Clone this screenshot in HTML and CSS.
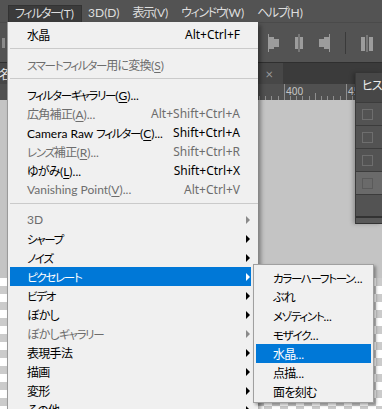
FILE: index.html
```html
<!DOCTYPE html>
<html lang="ja">

<head>
    <meta charset="UTF-8">
    <meta name="viewport" content="width=device-width, initial-scale=1.0">
    <title>フィルターメニュー</title>
    <link rel="stylesheet" href="styles.css">
</head>

<body>
    <div class="app">
        <div class="menubar">
            <span class="mbItem active">フィルター<span class="en">(T)</span></span>
            <span class="mbItem"><span class="en">3D(D)</span></span>
            <span class="mbItem">表示<span class="en">(V)</span></span>
            <span class="mbItem">ウィンドウ<span class="en">(W)</span></span>
            <span class="mbItem">ヘルプ<span class="en">(H)</span></span>
        </div>

        <div class="optbar">
            <span class="grip"></span>
            <div class="alignIcons">
                <svg width="12" height="18" viewBox="0 0 12 18">
                    <rect x="0" y="0" width="1" height="18" />
                    <rect x="1" y="3" width="5" height="12" />
                    <rect x="6" y="5" width="5" height="8" />
                </svg>
                <svg width="12" height="18" viewBox="0 0 12 18">
                    <rect x="5.5" y="0" width="1" height="18" />
                    <rect x="2" y="3" width="8" height="12" />
                    <rect x="5.5" y="3" width="1" height="12" fill="#535353" />
                </svg>
                <svg width="12" height="18" viewBox="0 0 12 18">
                    <rect x="11" y="0" width="1" height="18" />
                    <rect x="6" y="3" width="5" height="12" />
                    <rect x="1" y="5" width="5" height="8" />
                </svg>
                <span class="optSep"></span>
                <svg width="12" height="18" viewBox="0 0 12 18">
                    <rect x="0" y="3" width="4" height="14" />
                    <rect x="5.5" y="1" width="1" height="17" />
                    <rect x="8" y="3" width="4" height="14" />
                </svg>
            </div>
        </div>

        <div class="tabbar">
            <span class="docTab"><span class="docName">名</span><span class="tabClose">×</span></span>
        </div>

        <div class="ruler">
            <svg width="382" height="16" viewBox="0 0 382 16">
                <g fill="#8e8e8e">
                    <rect x="259" y="12" width="1" height="4" />
                    <rect x="265" y="12" width="1" height="4" />
                    <rect x="271" y="12" width="1" height="4" />
                    <rect x="278" y="12" width="1" height="4" />
                    <rect x="284" y="0" width="1" height="16" />
                    <rect x="290" y="12" width="1" height="4" />
                    <rect x="296" y="12" width="1" height="4" />
                    <rect x="302" y="12" width="1" height="4" />
                    <rect x="309" y="12" width="1" height="4" />
                    <rect x="315" y="9" width="1" height="7" />
                    <rect x="321" y="12" width="1" height="4" />
                    <rect x="327" y="12" width="1" height="4" />
                    <rect x="333" y="12" width="1" height="4" />
                    <rect x="340" y="12" width="1" height="4" />
                    <rect x="346" y="0" width="1" height="16" />
                    <rect x="352" y="12" width="1" height="4" />
                </g>
                <text x="286" y="11" class="rulerNum">400</text>
                <text x="348" y="11" class="rulerNum">45</text>
            </svg>
        </div>

        <div class="canvas">
            <div class="canvasGray"></div>
            <div class="canvasChecker"></div>
        </div>

        <div class="history">
            <div class="histHead">ヒス</div>
            <div class="histRow"><span class="histBox"></span></div>
            <div class="histRow"><span class="histBox"></span></div>
            <div class="histRow"><span class="histBox"></span></div>
            <div class="histRow current"><span class="histBox"></span></div>
            <div class="histRow last"></div>
            <div class="histFoot"></div>
        </div>
    </div>

    <div class="menu">
        <div class="item"><span class="label">水晶</span><span class="key">Alt+Ctrl+F</span></div>
        <div class="sep"></div>
        <div class="item off"><span class="label"><span class="kt">スマートフィルター</span>用に変換<span class="en">(<u>S</u>)</span></span></div>
        <div class="sep"></div>
        <div class="item"><span class="label"><span class="kt">フィルターギャラリー</span><span class="en">(<u>G</u>)...</span></span></div>
        <div class="item off"><span class="label">広角補正<span class="en">(<u>A</u>)...</span></span><span class="key">Alt+Shift+Ctrl+A</span></div>
        <div class="item"><span class="label"><span class="en">Camera Raw </span><span class="kt">フィルター</span><span class="en">(<u>C</u>)...</span></span><span class="key">Shift+Ctrl+A</span></div>
        <div class="item off"><span class="label"><span class="kt">レンズ</span>補正<span class="en">(<u>R</u>)...</span></span><span class="key">Shift+Ctrl+R</span></div>
        <div class="item"><span class="label">ゆがみ<span class="en">(<u>L</u>)...</span></span><span class="key">Shift+Ctrl+X</span></div>
        <div class="item off"><span class="label"><span class="en">Vanishing Point(<u>V</u>)...</span></span><span class="key">Alt+Ctrl+V</span></div>
        <div class="sep"></div>
        <div class="item sub off"><span class="label"><span class="en">3D</span></span><span class="arrow"></span></div>
        <div class="item sub"><span class="label"><span class="kt">シャープ</span></span><span class="arrow"></span></div>
        <div class="item sub"><span class="label"><span class="kt">ノイズ</span></span><span class="arrow"></span></div>
        <div class="item sub hover"><span class="label"><span class="kt">ピクセレート</span></span><span class="arrow"></span></div>
        <div class="item sub"><span class="label"><span class="kt">ビデオ</span></span><span class="arrow"></span></div>
        <div class="item sub"><span class="label">ぼかし</span><span class="arrow"></span></div>
        <div class="item sub off"><span class="label">ぼかし<span class="kt">ギャラリー</span></span><span class="arrow"></span></div>
        <div class="item sub"><span class="label">表現手法</span><span class="arrow"></span></div>
        <div class="item sub"><span class="label">描画</span><span class="arrow"></span></div>
        <div class="item sub"><span class="label">変形</span><span class="arrow"></span></div>
        <div class="item sub"><span class="label">その他</span><span class="arrow"></span></div>
    </div>

    <div class="submenu">
        <div class="item"><span class="label"><span class="kt">カラーハーフトーン</span><span class="en">...</span></span></div>
        <div class="item"><span class="label">ぶれ</span></div>
        <div class="item"><span class="label"><span class="kt">メゾティント</span><span class="en">...</span></span></div>
        <div class="item"><span class="label"><span class="kt">モザイク</span><span class="en">...</span></span></div>
        <div class="item hover"><span class="label">水晶<span class="en">...</span></span></div>
        <div class="item"><span class="label">点描<span class="en">...</span></span></div>
        <div class="item"><span class="label">面を刻む</span></div>
    </div>
</body>

</html>
```

FILE: styles.css
```css
* {
    box-sizing: border-box;
}

html,
body {
    margin: 0;
    height: 100%;
    overflow: hidden;
}

body {
    font-family: Lato, "Noto Sans CJK JP", sans-serif;
    font-size: 12px;
    font-feature-settings: "palt";
    background: #535353;
    color: #000;
}

/* japanese runs are set tight, latin runs normal */
.en {
    letter-spacing: 0;
}

.app {
    position: relative;
    height: 409px;
    display: flex;
    flex-direction: column;
}

/* menu bar */
.menubar {
    height: 22px;
    display: flex;
    align-items: flex-end;
    padding-left: 8px;
    background: #535353;
    color: #dedede;
}

.mbItem {
    height: 17px;
    line-height: 16px;
    padding: 0 7px 0 6px;
    letter-spacing: -1.4px;
    white-space: nowrap;
}

.mbItem.active {
    background: #3b3b3b;
    border: 1px solid #333;
    border-bottom: none;
}

/* options bar */
.optbar {
    height: 40px;
    display: flex;
    align-items: center;
    background: #535353;
    border-top: 1px solid #4a4a4a;
}

.grip {
    width: 3px;
    height: 10px;
    margin-left: 2px;
    background: #8a8a8a;
}

.alignIcons {
    display: flex;
    align-items: center;
    gap: 13px;
    margin-left: auto;
    padding-right: 9px;
    fill: #9c9c9c;
}

.optSep {
    width: 1px;
    height: 22px;
    margin: 0 2px;
    background: #3a3a3a;
}

/* document tabs */
.tabbar {
    height: 22px;
    display: flex;
    background: #3b3b3b;
    border-top: 1px solid #2f2f2f;
}

.docTab {
    width: 283px;
    display: flex;
    justify-content: space-between;
    align-items: center;
    padding: 0 10px 0 0;
    background: #474747;
    color: #e6e6e6;
    white-space: nowrap;
    overflow: hidden;
}

.docName {
    margin-left: -1px;
}

.tabClose {
    color: #9a9a9a;
    font-size: 13px;
}

/* ruler */
.ruler {
    height: 16px;
    background: #505050;
}

.ruler svg {
    display: block;
}

.rulerNum {
    font-family: "Noto Sans", sans-serif;
    font-size: 10px;
    fill: #c4c4c4;
}

/* canvas */
.canvas {
    flex: 1;
    display: flex;
    flex-direction: column;
}

.canvasGray {
    height: 178px;
    background: #c4c4c4;
}

.canvasChecker {
    flex: 1;
    background: conic-gradient(#cbcbcb 0 25%, #fff 0 50%, #cbcbcb 0 75%, #fff 0) 0 0 / 16px 16px;
}

/* history panel */
.history {
    position: absolute;
    right: 0;
    top: 73px;
    width: 27px;
    background: #535353;
    border-left: 1px solid #3a3a3a;
    box-shadow: -2px 0 4px rgba(0, 0, 0, 0.25);
}

.histHead {
    height: 29px;
    line-height: 26px;
    padding-left: 6px;
    background: #474747;
    color: #ececec;
    letter-spacing: -1px;
    white-space: nowrap;
    overflow: hidden;
}

.histRow {
    height: 23px;
    display: flex;
    align-items: center;
    padding-left: 6px;
    border-top: 1px solid #3c3c3c;
}

.histRow.current {
    background: #6a6a6a;
}

.histRow.last {
    height: 24px;
    border-bottom: 2px solid #333;
}

.histBox {
    width: 11px;
    height: 11px;
    border: 1px solid #6e6e6e;
}

.current .histBox {
    border-color: #5a5a5a;
}

.histFoot {
    height: 6px;
    background: #595959;
    border-bottom: 1px solid #333;
}

/* dropdown menu */
.menu {
    position: absolute;
    left: 7px;
    top: 22px;
    width: 251px;
    height: 400px;
    padding: 3px 0 0 2px;
    background: #f0f0f0;
    border-left: 1px solid #9a9a9a;
    box-shadow: 3px 3px 4px rgba(0, 0, 0, 0.35);
}

.item {
    height: 19px;
    display: flex;
    align-items: center;
    margin-right: 7px;
    padding: 0 11px 0 17px;
    white-space: nowrap;
}

.item .label {
    flex: 1;
    letter-spacing: -0.7px;
}

.item .label .kt {
    font-size: 11.5px;
    letter-spacing: -1.3px;
}

.item .label .en {
    letter-spacing: 0;
}

.item u {
    text-underline-offset: 2px;
}

.key {
    font-family: "Noto Sans", sans-serif;
}

.item.sub {
    padding-right: 1px;
}

.item.off {
    color: #6d6d6d;
}

.item.hover {
    background: #0078d7;
    color: #fff;
}

.arrow {
    width: 0;
    height: 0;
    border-top: 4px solid transparent;
    border-bottom: 4px solid transparent;
    border-left: 4px solid #000;
}

.off .arrow {
    border-left-color: #8a8a8a;
}

.hover .arrow {
    border-left-color: #fff;
}

.sep {
    height: 1px;
    margin: 4px 0 6px;
    background: #cacaca;
}

/* submenu */
.submenu {
    position: absolute;
    left: 253px;
    top: 264px;
    width: 121px;
    padding: 3px 2px 1px;
    background: #f0f0f0;
    border: 1px solid #a0a0a0;
    box-shadow: 2px 2px 3px rgba(0, 0, 0, 0.35);
}

.submenu .item {
    margin-right: 0;
    padding: 0 4px 0 17px;
}
```
